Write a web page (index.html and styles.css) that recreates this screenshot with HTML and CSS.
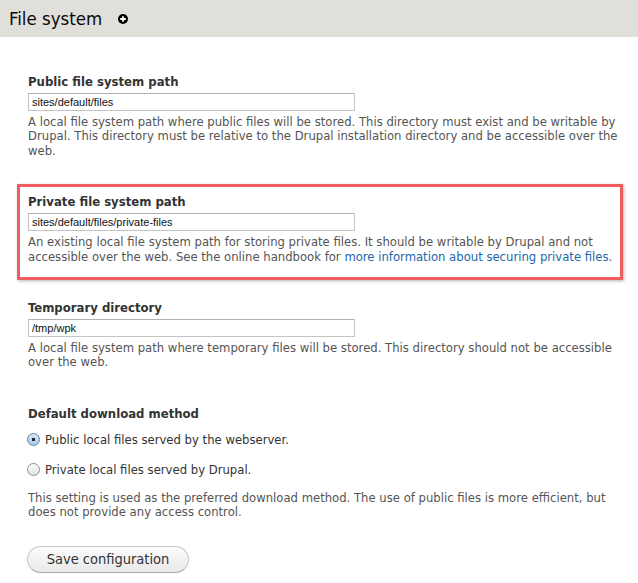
FILE: index.html
```html
<!DOCTYPE html>
<html lang="en">
<head>
<meta charset="utf-8">
<title>File system</title>
<link rel="stylesheet" href="styles.css">
</head>
<body>
<header class="page-header">
  <h1 class="page-title">File system</h1>
  <span class="shortcut-icon" aria-label="Add to shortcuts">
    <svg width="10" height="10" viewBox="0 0 10 10"><circle cx="5" cy="5" r="5" fill="#000"/><path d="M5 2.2v5.6M2.2 5h5.6" stroke="#fff" stroke-width="1.8"/></svg>
  </span>
</header>
<form class="settings">
  <div class="field">
    <label class="field-label" for="public">Public file system path</label>
    <input class="text-input" id="public" type="text" value="sites/default/files">
    <p class="description">A local file system path where public files will be stored. This directory must exist and be writable by Drupal. This directory must be relative to the Drupal installation directory and be accessible over the web.</p>
  </div>
  <div class="field highlight">
    <label class="field-label" for="private">Private file system path</label>
    <input class="text-input" id="private" type="text" value="sites/default/files/private-files">
    <p class="description">An existing local file system path for storing private files. It should be writable by Drupal and not accessible over the web. See the online handbook for <a href="#">more information about securing private files</a>.</p>
  </div>
  <div class="field">
    <label class="field-label" for="temp">Temporary directory</label>
    <input class="text-input" id="temp" type="text" value="/tmp/wpk">
    <p class="description">A local file system path where temporary files will be stored. This directory should not be accessible over the web.</p>
  </div>
  <div class="field radios">
    <span class="field-label">Default download method</span>
    <label class="radio-row"><input class="radio" type="radio" name="method" checked> Public local files served by the webserver.</label>
    <label class="radio-row"><input class="radio" type="radio" name="method"> Private local files served by Drupal.</label>
    <p class="description">This setting is used as the preferred download method. The use of public files is more efficient, but does not provide any access control.</p>
  </div>
  <div class="actions">
    <button class="button" type="button">Save configuration</button>
  </div>
</form>
</body>
</html>
```
FILE: styles.css
```css
html, body {
  margin: 0;
  padding: 0;
  background: #fff;
}
body {
  font-family: "DejaVu Sans Condensed", "DejaVu Sans", sans-serif;
  font-stretch: condensed;
  color: #333;
}
.page-header {
  height: 37px;
  background: #e0dfd9;
  display: flex;
  align-items: center;
  padding-left: 9px;
  gap: 16px;
}
.page-title {
  margin: 0;
  font-size: 18.5px;
  font-weight: normal;
  color: #0a0a0a;
  line-height: 37px;
}
.shortcut-icon {
  display: flex;
  width: 10px;
  height: 10px;
  margin-top: 1px;
}
.settings {
  padding: 37px 10px 0 28px;
  width: 600px;
}
.field + .field {
  margin-top: 36px;
}
.field-label {
  display: block;
  font-size: 13px;
  font-weight: bold;
  line-height: 16px;
  color: #333;
  margin-bottom: 3px;
}
.text-input {
  display: block;
  box-sizing: border-box;
  width: 327px;
  height: 18px;
  margin: 0;
  padding: 0 3px;
  border: 1px solid #c4c4c4;
  border-top-color: #b0b0b0;
  font-family: "Liberation Sans", Arial, sans-serif;
  font-size: 11px;
  color: #111;
  background: #fff;
}
.description {
  margin: 4px 0 0;
  font-family: "DejaVu Sans", sans-serif;
  font-stretch: normal;
  font-size: 11.65px;
  line-height: 14.4px;
  color: #555;
}
.description a {
  color: #2566ab;
  text-decoration: none;
}
.highlight {
  position: relative;
}
.highlight::before {
  content: "";
  position: absolute;
  left: -11px;
  right: 5px;
  top: -10px;
  bottom: -16px;
  border: 3px solid #ef5f5f;
  box-shadow: 1px 1px 3px rgba(0, 0, 0, 0.3);
  pointer-events: none;
}
.radios .field-label {
  margin-bottom: 10px;
}
.radio-row {
  display: flex;
  align-items: center;
  gap: 5px;
  font-family: "DejaVu Sans", sans-serif;
  font-stretch: normal;
  font-size: 11.65px;
  line-height: 16px;
  color: #333;
  margin-left: -1px;
}
.radio-row + .radio-row {
  margin-top: 14px;
}
.radio {
  appearance: none;
  -webkit-appearance: none;
  margin: 0;
  width: 13px;
  height: 13px;
  border-radius: 50%;
  border: 1px solid #8f8f8f;
  background: linear-gradient(#fdfdfd, #e2e2e2);
  box-sizing: border-box;
  position: relative;
}
.radio:checked {
  border-color: #5d7fa8;
  background: radial-gradient(circle, #1b2a3a 0 1.6px, transparent 2px), linear-gradient(#d9e9f8, #a9c7e6);
}
.radios .description {
  margin-top: 13px;
}
.actions {
  margin-top: 26px;
}
.button {
  display: flex;
  align-items: center;
  justify-content: center;
  box-sizing: border-box;
  width: 162px;
  height: 27px;
  margin-left: -1px;
  padding: 0;
  border: 1px solid #c6c6c6;
  border-bottom-color: #aaa;
  border-radius: 14px;
  background: linear-gradient(#fbfbfb, #e9e9e9);
  font-family: "DejaVu Sans Condensed", "DejaVu Sans", sans-serif;
  font-stretch: condensed;
  font-size: 14.5px;
  color: #333;
}
```
